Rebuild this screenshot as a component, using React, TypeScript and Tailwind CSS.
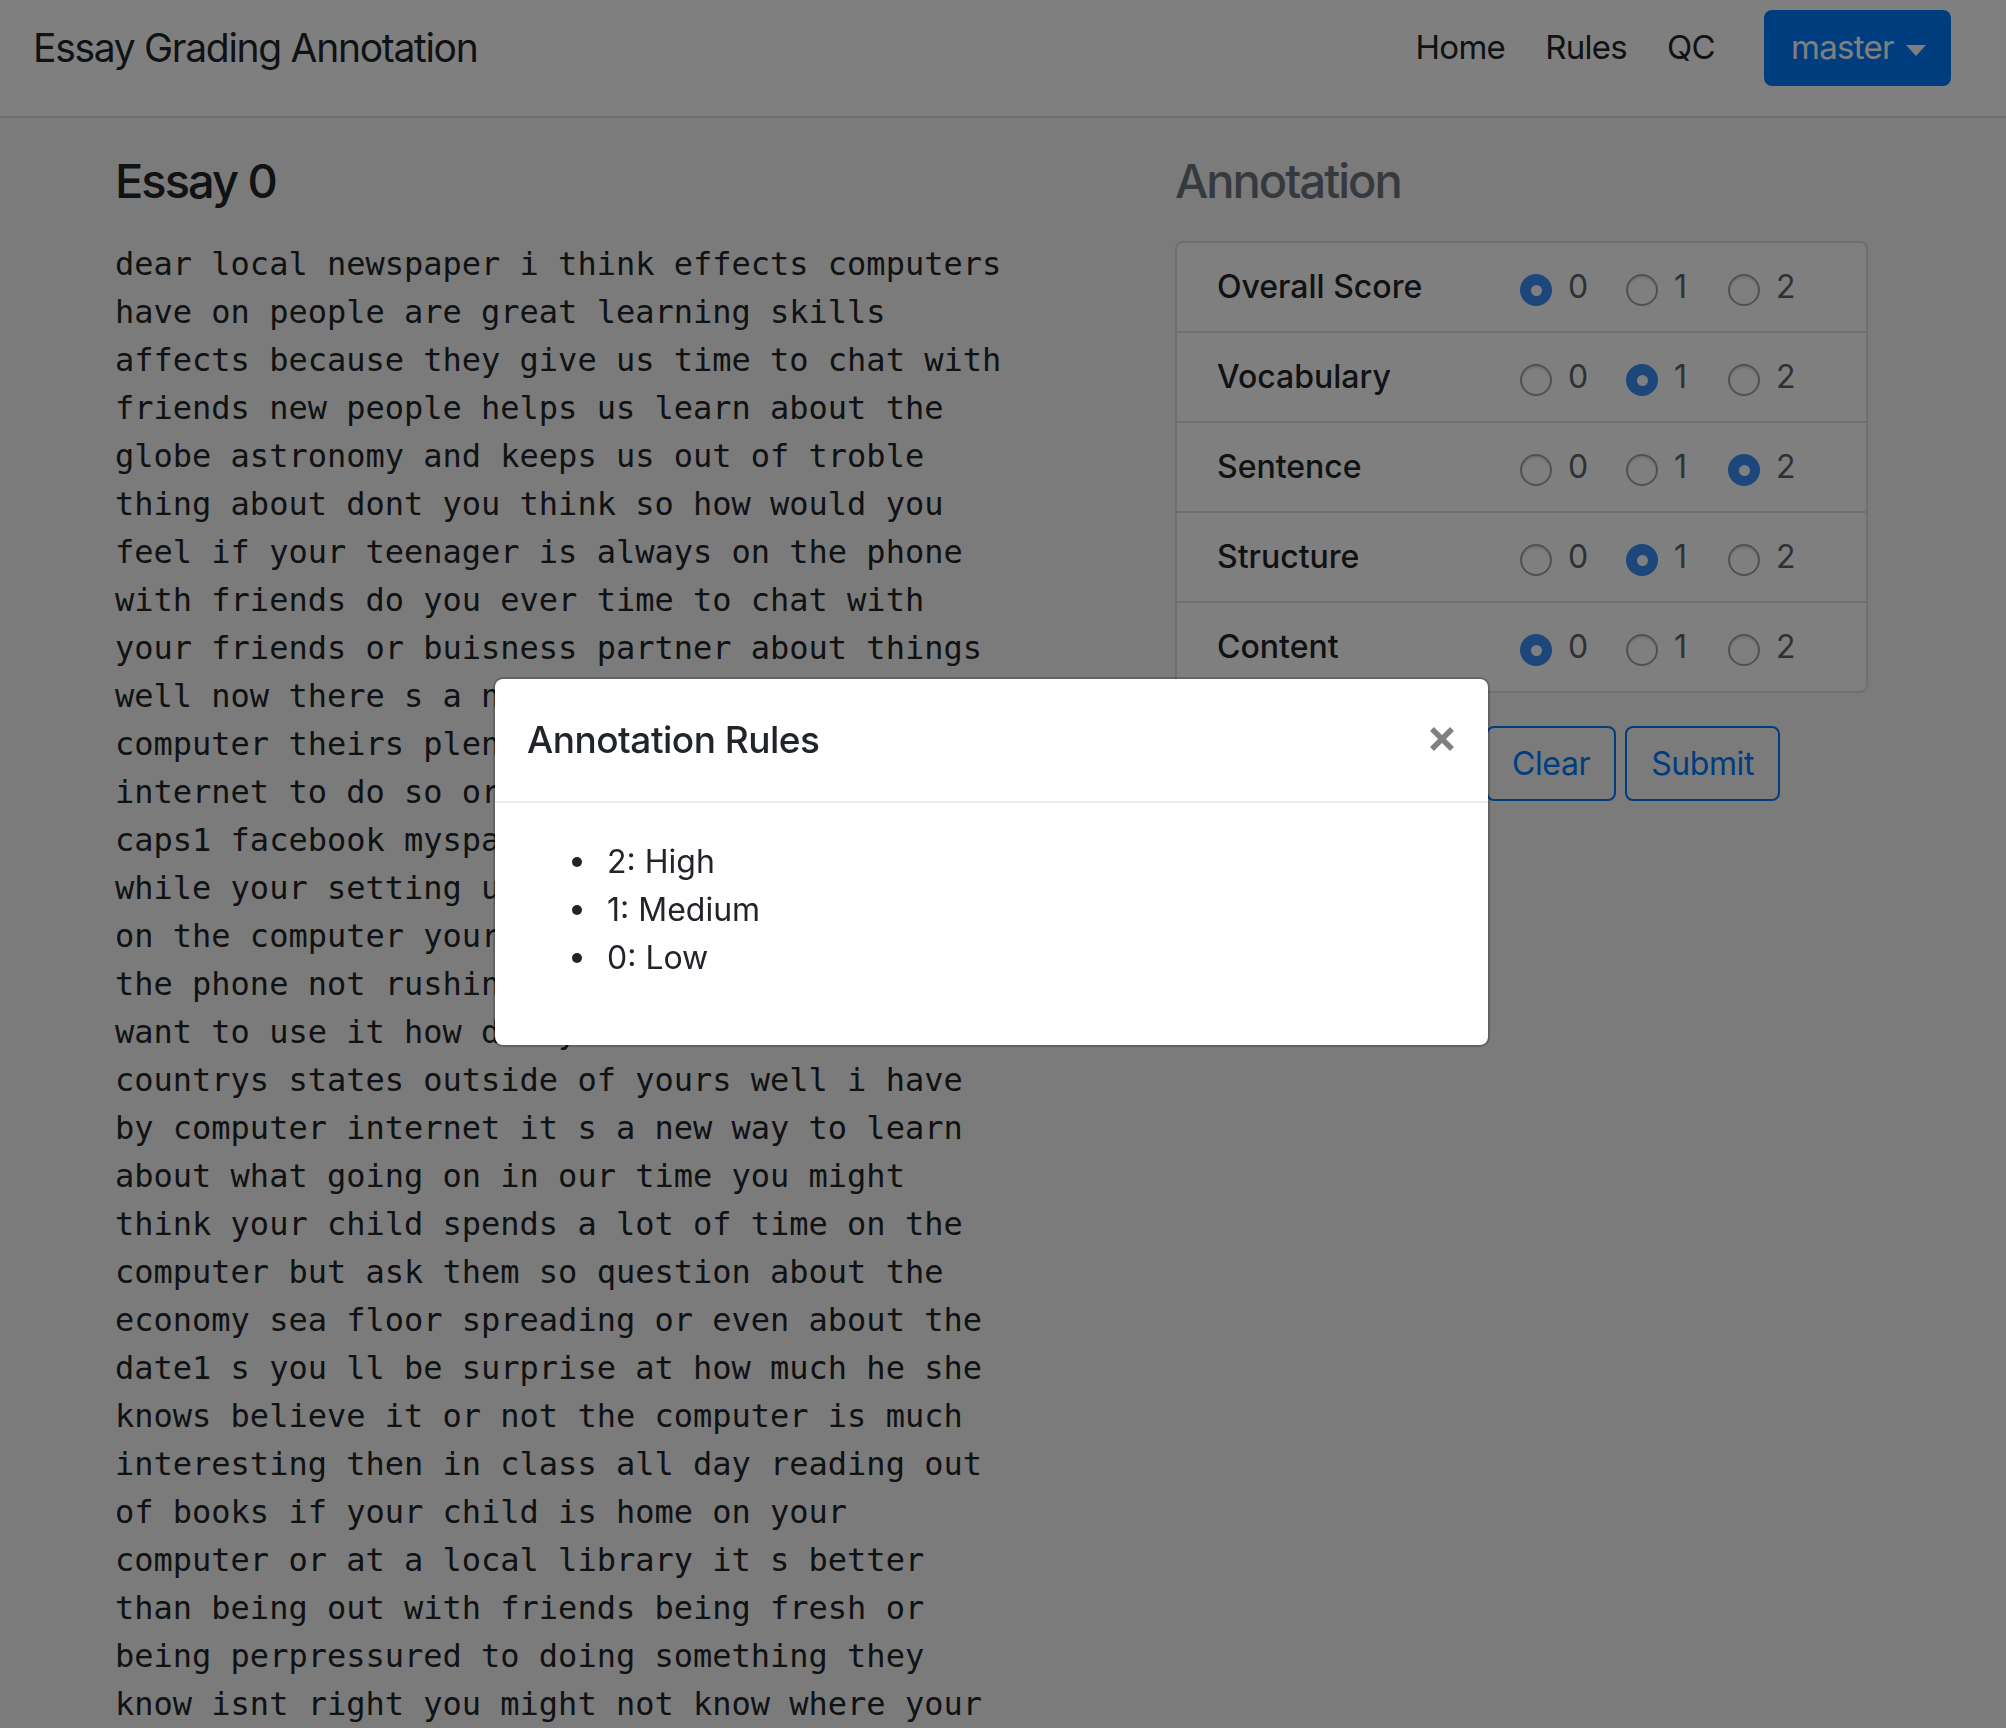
import React, { useState } from 'react';

const ESSAY_LINES = [
    'dear local newspaper i think effects computers',
    'have on people are great learning skills',
    'affects because they give us time to chat with',
    'friends new people helps us learn about the',
    'globe astronomy and keeps us out of troble',
    'thing about dont you think so how would you',
    'feel if your teenager is always on the phone',
    'with friends do you ever time to chat with',
    'your friends or buisness partner about things',
    'well now there s a new way to chat the',
    'computer theirs plenty of sites on the',
    'internet to do so organization1 organization2',
    'caps1 facebook myspace ect just think now',
    'while your setting up meeting with your boss',
    'on the computer your teenager is having fun',
    'the phone not rushing to get off cause you',
    'want to use it how did you learn about other',
    'countrys states outside of yours well i have',
    'by computer internet it s a new way to learn',
    'about what going on in our time you might',
    'think your child spends a lot of time on the',
    'computer but ask them so question about the',
    'economy sea floor spreading or even about the',
    'date1 s you ll be surprise at how much he she',
    'knows believe it or not the computer is much',
    'interesting then in class all day reading out',
    'of books if your child is home on your',
    'computer or at a local library it s better',
    'than being out with friends being fresh or',
    'being perpressured to doing something they',
    'know isnt right you might not know where your',
];

const CRITERIA = ['Overall Score', 'Vocabulary', 'Sentence', 'Structure', 'Content'];
const INITIAL_SCORES = [0, 1, 2, 1, 0];
const OPTIONS = [0, 1, 2];
const RULES = ['2: High', '1: Medium', '0: Low'];

interface RadioProps {
    checked: boolean;
    value: number;
    onSelect: () => void;
}

const Radio: React.FC<RadioProps> = ({ checked, value, onSelect }) => (
    <button onClick={onSelect} className={`shrink-0 flex items-center ${value === 0 ? 'w-[106px]' : value === 1 ? 'w-[102px]' : ''}`}>
        {checked ? (
            <span className="w-[32px] h-[32px] mt-[6px] rounded-full bg-[#3a8df5] flex items-center justify-center">
                <span className="w-[11px] h-[11px] rounded-full bg-white" />
            </span>
        ) : (
            <span className="w-[32px] h-[32px] mt-[6px] rounded-full bg-white border-2 border-[#a3a3a3] shadow-[inset_0_2px_2px_rgba(0,0,0,0.12)]" />
        )}
        <span className="ml-[16px] text-[32px] leading-[48px] text-[#5c636a]">{value}</span>
    </button>
);

export default function App() {
    const [scores, setScores] = useState<number[]>(INITIAL_SCORES);
    const [showRules, setShowRules] = useState(true);

    const setScore = (row: number, value: number) => {
        setScores(prev => prev.map((s, i) => (i === row ? value : s)));
    };

    return (
        <div className="relative h-screen overflow-hidden bg-[#f6f6f6] text-[#212529] font-['Inter','Roboto',sans-serif]">
            {/* Navbar */}
            <nav className="h-[118px] bg-white border-b-2 border-[#dcdcdc] flex items-start justify-between pl-[33px] pr-[55px]">
                <div className="h-[76px] mt-[10px] flex items-center text-[39px] tracking-[-1.3px]">Essay Grading Annotation</div>
                <div className="h-[76px] mt-[10px] flex items-center text-[33px] tracking-[-0.7px]">
                    <a>Home</a>
                    <a className="ml-[40px]">Rules</a>
                    <a className="ml-[40px]">QC</a>
                    <button className="ml-[49px] w-[187px] h-[76px] rounded-[8px] bg-[#007bff] text-white flex items-center pl-[27px]">
                        master
                        <span className="ml-[12px] mt-[4px] w-0 h-0 border-l-[10px] border-r-[10px] border-t-[11px] border-l-transparent border-r-transparent border-t-white" />
                    </button>
                </div>
            </nav>

            {/* Main */}
            <div className="ml-[85px] flex pt-[34px]">
                <div className="w-[1060px] px-[30px]">
                    <h4 className="text-[47px] leading-[57px] font-medium tracking-[-2px] mb-[31px]">Essay 0</h4>
                    <div className="font-['DejaVu_Sans_Mono',monospace] text-[32px] leading-[48px]">
                        {ESSAY_LINES.map((line, i) => (
                            <div key={i} className="whitespace-nowrap">{line}</div>
                        ))}
                    </div>
                </div>

                <div className="w-[754px] px-[30px]">
                    <h4 className="text-[47px] leading-[57px] font-medium tracking-[-2px] text-[#6c757d] mb-[32px]">Annotation</h4>
                    <div className="w-[693px] bg-white border-2 border-[#dfdfdf] rounded-[8px]">
                        {CRITERIA.map((name, row) => (
                            <div key={name} className={`h-[88px] flex items-center px-[40px] ${row < CRITERIA.length - 1 ? 'box-content border-b-2 border-[#dfdfdf]' : ''}`}>
                                <div className="w-[303px] shrink-0 text-[32px] font-medium">{name}</div>
                                <div className="flex items-center">
                                    {OPTIONS.map(opt => (
                                        <Radio key={opt} checked={scores[row] === opt} value={opt} onSelect={() => setScore(row, opt)} />
                                    ))}
                                </div>
                            </div>
                        ))}
                    </div>
                    <div className="mt-[33px] ml-[311px] flex text-[32px] tracking-[-0.4px]">
                        <button onClick={() => setScores([0, 0, 0, 0, 0])} className="h-[75px] px-[24px] border-2 border-[#007bff] rounded-[8px] text-[#007bff]">Clear</button>
                        <button className="ml-[9px] h-[75px] px-[24px] border-2 border-[#007bff] rounded-[8px] text-[#007bff]">Submit</button>
                    </div>
                </div>
            </div>

            {/* Rules modal */}
            {showRules && (
                <>
                    <div className="fixed inset-0 bg-black/50" onClick={() => setShowRules(false)} />
                    <div className="fixed left-[493px] top-[677px] w-[997px] bg-white rounded-[10px] border-2 border-black/20 bg-clip-padding">
                        <div className="h-[124px] border-b-2 border-[#e9ecef] flex items-start justify-between px-[32px] pt-[32px]">
                            <h5 className="text-[37px] leading-[58px] font-medium tracking-[-0.5px]">Annotation Rules</h5>
                            <button onClick={() => setShowRules(false)} className="mt-[16px] mr-[2px]">
                                <svg width="24" height="24" viewBox="0 0 24 24">
                                    <path d="M2 2 L22 22 M22 2 L2 22" stroke="#808080" strokeWidth="5.5" strokeLinecap="butt" />
                                </svg>
                            </button>
                        </div>
                        <div className="px-[32px] pt-[35px] pb-[31px]">
                            <ul className="pl-[45px] mb-[32px] text-[32px] leading-[48px]">
                                {RULES.map(rule => (
                                    <li key={rule} className="flex items-center">
                                        <span className="w-[10px] h-[10px] rounded-full bg-[#212529] mr-[25px]" />
                                        {rule}
                                    </li>
                                ))}
                            </ul>
                        </div>
                    </div>
                </>
            )}
        </div>
    );
}
